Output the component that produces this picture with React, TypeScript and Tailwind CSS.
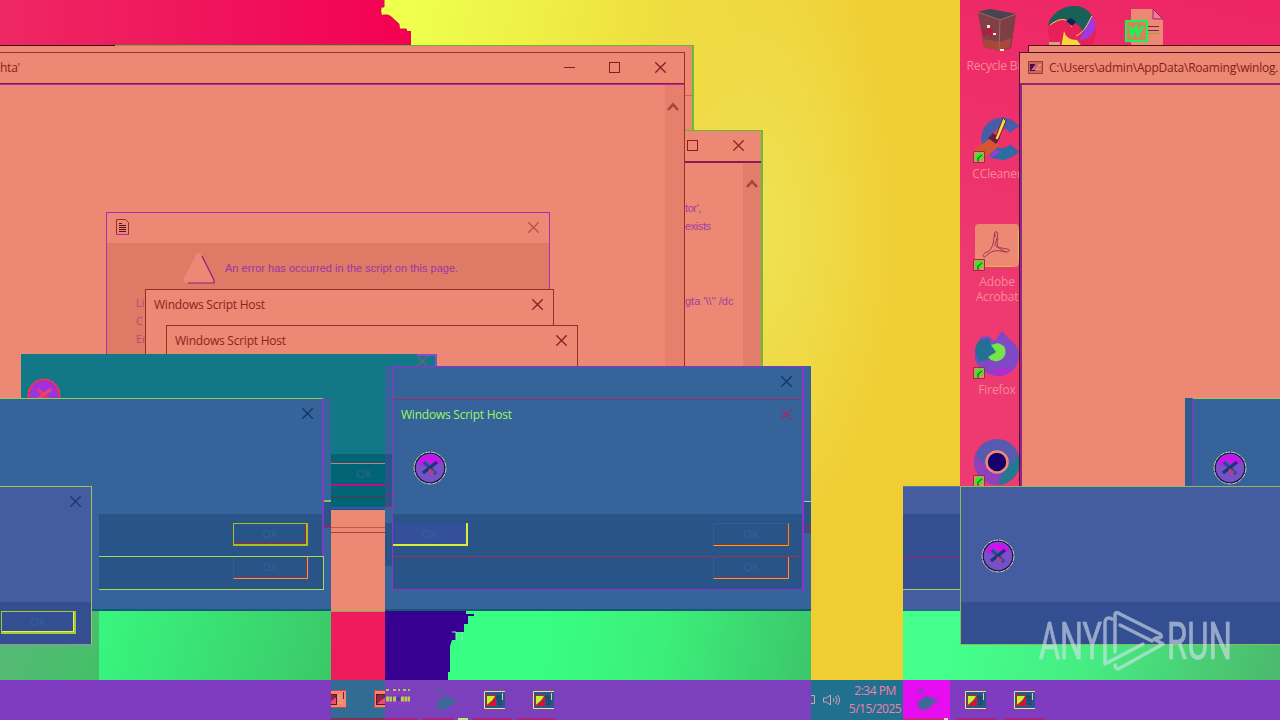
import type { ReactNode } from "react";

const UI = "font-['Open_Sans','Noto_Sans',sans-serif]";

function Close({ className = "text-[#8a2a20]" }: { className?: string }) {
  return (
    <svg className={`h-[11px] w-[11px] shrink-0 ${className}`} viewBox="0 0 11 11" fill="none" stroke="currentColor" strokeWidth="1.3">
      <path d="M.3 .3 10.7 10.7M10.7 .3 .3 10.7" />
    </svg>
  );
}

function Maximize() {
  return <span className="block h-[11px] w-[11px] shrink-0 border border-[#8a1c20]" />;
}

function Chevron({ className = "" }: { className?: string }) {
  return (
    <svg className={`h-[9px] w-3 ${className}`} viewBox="0 0 12 9" fill="none" stroke="#aa4438" strokeWidth="2.6">
      <path d="M1 8 6 2.500 11 8" />
    </svg>
  );
}

function ErrorIcon({ tone = "blue" }: { tone?: "blue" | "red" }) {
  const red = tone === "red";
  return (
    <svg className="block h-[34px] w-[34px] shrink-0" viewBox="0 0 34 34" fill="none">
      <circle cx="17" cy="17" r="15" fill={red ? "#9838d0" : "#7650c4"} stroke={red ? "#ff2058" : "#101858"} strokeWidth="1.6" />
      <circle cx="17" cy="17" r="15.900" stroke={red ? "#ff4060" : "#f0dc98"} strokeWidth=".9" strokeDasharray="5 .8" />
      <path d="M5 12A13 13 0 0 1 29 12L20 15 14 9 10 15Z" fill={red ? "#a030e0" : "#d010ee"} />
      <path d="M11 11 23 23" stroke={red ? "#e03878" : "#304898"} strokeWidth="3.4" />
      <path d="M10 22 24 11" stroke={red ? "#f04070" : "#143878"} strokeWidth="3.4" />
      <path d="M16 18 20 21 18 23" stroke="#e83068" strokeWidth="1.800" />
    </svg>
  );
}

function Shortcut() {
  return (
    <svg className="absolute bottom-0 left-0 h-3 w-3" viewBox="0 0 12 12">
      <path d="M.5 .5h11v11H.5z" fill="#d89060" stroke="#a02848" />
      <path d="M2 9V5l3-3h5v5L7 9 5 8l-2 3z" fill="#28f020" />
      <path d="M5 11V7l4-3" stroke="#204020" fill="none" />
    </svg>
  );
}

function Desk({ label, children }: { label: ReactNode; children?: ReactNode }) {
  return (
    <div className="flex h-[108px] w-[74px] flex-col items-center">
      <div className="relative h-12 w-12">{children}</div>
      <span className="mt-[3px] whitespace-nowrap text-center text-[12px] leading-[15px] tracking-[-0.15px] text-[#fa8896]">{label}</span>
    </div>
  );
}

function Program({ variant = "purple" }: { variant?: "purple" | "salmon" }) {
  const s = variant === "salmon";
  return (
    <svg className="block h-5 w-[23px] shrink-0" viewBox="0 0 23 20" fill="none">
      <path d="M1 1h21v18H1z" fill={s ? "#f08870" : "#285888"} />
      <path d="M22 1.500H1.500v17H22" stroke={s ? "#c84850" : "#e8e880"} />
      <path d="M3 5h10v11H3z" fill={s ? "#581830" : "#d01838"} />
      <path d="M4 6h8L9 11l-5 4z" fill={s ? "#902840" : "#b8f830"} />
      <path d="M4 15 12 8v7z" fill={s ? "#e85070" : "#c81838"} />
      <path d="M14 6h3v3h-3zM14 11h5M14 14h5" stroke={s ? "#f0a088" : "#183868"} />
      <path d="M19.500 3v7" stroke={s ? "#801830" : "#c0e088"} />
    </svg>
  );
}

function Bird() {
  return (
    <svg className="block h-6 w-7 shrink-0 blur-[1px]" viewBox="0 0 28 24" fill="#3a6a96">
      <path d="M4 3 8 1l4 3H7zM5 15c3-6 9-7 12-6l9 5-7 2c-2 7-12 7-14 3z" />
    </svg>
  );
}

function OkButton({ className }: { className: string }) {
  return <span className={`block text-center font-['Noto_Sans',sans-serif] text-[11px] text-[#34609a] ${className}`}>OK</span>;
}

function Wallpaper() {
  return (
    <>
      <div className="absolute inset-0 bg-[linear-gradient(97deg,#eeff4e_30%,#eff045_39%,#efdc3e_49%,#f0cd33_64%)]" />
      <div className="absolute inset-0 bg-[radial-gradient(ellipse_150px_330px_at_755px_230px,#efe254_5%,#efdc4a_35%,transparent)]" />
      <svg className="absolute left-0 top-0 h-[45px] w-[414px]" viewBox="0 0 414 45">
        <defs>
          <linearGradient id="pinkTop" x1="0" x2="1">
            <stop offset="0" stopColor="#ee2862" />
            <stop offset=".6" stopColor="#f0105c" />
            <stop offset="1" stopColor="#f40052" />
          </linearGradient>
        </defs>
        <path d="M0 0H384V7H381V10L382 15H389L392 17 395 20 399 24 400 29H407V31H411V45H0Z" fill="url(#pinkTop)" />
        <path d="M384 0V7H381V10M383 15H388L399 24V29H406" fill="none" stroke="#c81848" />
      </svg>
      <div className="absolute left-[960px] top-0 h-[486px] w-80 bg-[linear-gradient(15deg,#ee3a70_35%,#ee2464)]" />
      <div className="absolute inset-x-0 bottom-10 flex h-[70px]">
        <div className="w-[99px] bg-[linear-gradient(120deg,#58b878,#44c068)]" />
        <div className="w-[232px] bg-[linear-gradient(105deg,#38f47e_5%,#3cc868)]" />
        <div className="w-[54px] bg-[#ee1c5c]" />
        <div className="w-[426px] bg-[linear-gradient(100deg,#38ff84_35%,#3cee7a_65%,#3cc66a)]" />
        <div className="w-[92px]" />
        <div className="flex-1 bg-[linear-gradient(105deg,#44ff8c_15%,#46ec82_50%,#4cb86c)]" />
      </div>
      <svg className="absolute left-[385px] top-[611px] h-[69px] w-[90px]" viewBox="0 0 90 69">
        <path d="M0 0H81V3H89V5H83V13H79V21H71V29H67L65 35V61H63V69H0Z" fill="#380090" />
        <path d="M67 21H71V29M77 21V29" stroke="#88f0c0" fill="none" />
      </svg>
    </>
  );
}

function LeftStack() {
  return (
    <>
      {/* rear windows */}
      <section className="absolute left-0 top-[45px] h-[321px] w-[694px] border-r-2 border-t border-r-[#64c030] border-t-[#64b838] bg-[#ec8874]">
        <div className="-mt-px h-px w-[115px] bg-[#300818]" />
        <div className="mt-[49px] h-px bg-[#cf6450]" />
      </section>
      <section className="absolute left-[685px] top-[130px] flex h-[236px] w-[78px] flex-col border-r-2 border-t border-r-[#64c030] border-t-[#64b838] bg-[#ec8874]">
        <div className="flex h-8 items-center gap-[35px] border-b-2 border-[#8c1c50] pb-[1px] pl-[2px]">
          <Maximize />
          <Close />
        </div>
        <div className="flex flex-1">
          <div className="w-[58px] whitespace-nowrap font-['Liberation_Sans',sans-serif] text-[11px] leading-[18px] tracking-[-0.4px] text-[#a040a0]">
            <p className="mt-[36px]">tor',</p>
            <p>exists</p>
            <p className="mt-[57px] tracking-[0px]">gta '\\'' /dc</p>
          </div>
          <div className="flex-1 bg-[#e47e6c]">
            <Chevron className="ml-[3px] mt-[16px]" />
          </div>
        </div>
      </section>

      {/* HTA host window */}
      <section className="absolute left-0 top-[52px] flex h-[460px] w-[685px] flex-col border-r border-t border-[#943024] bg-[#ec8874]">
        <header className="flex h-[30px] shrink-0 items-center pb-[2px] text-[12px] tracking-[-0.25px] text-[#8a2418]">
          <span className="flex-1 pt-[2px]">hta'</span>
          <span className="mr-[34px] h-px w-[11px] bg-[#8a1c20]" />
          <Maximize />
          <Close className="ml-[35px] mr-[18px] text-[#8a1c20]" />
        </header>
        <div className="h-[2px] shrink-0 border-b border-[#b828b8] bg-[#8c1840]" />
        <div className="ml-auto w-[19px] flex-1 bg-[#e6806c]">
          <Chevron className="ml-[2px] mt-[17px]" />
        </div>
      </section>

      {/* script error dialog */}
      <section className="absolute left-[106px] top-[212px] flex h-[160px] w-[444px] flex-col border border-[#a830b8] bg-[#ec8874]">
        <header className="flex h-[30px] shrink-0 items-center justify-between pb-[2px] pl-[9px] pr-[10px]">
          <svg className="h-4 w-[13px]" viewBox="0 0 13 16" fill="none" stroke="#a02c24">
            <path d="M.5 15.500V.5h9l3 3v12z" />
            <path d="M.5 15.500h12" stroke="#c020a8" />
            <path d="M3 4.500h3M3 6.500h7M3 8.500h7M3 10.500h7M3 12.500h7" stroke="#501018" />
          </svg>
          <Close className="text-[#b84e44]" />
        </header>
        <div className="flex-1 bg-[#de7a66]">
          <div className="flex items-center pl-[75px] pt-[9px]">
            <svg className="h-8 w-[34px]" viewBox="0 0 34 32">
              <path d="M15 1h3l15 28-2 2H4l-3-3z" fill="#ec8874" />
              <path d="M20 4 32 28v3H6" fill="none" stroke="#902080" strokeWidth="1.200" />
            </svg>
            <span className="ml-[9px] whitespace-nowrap font-['Liberation_Sans',sans-serif] text-[11px] tracking-[0.03px] text-[#a034a8]">
              An error has occurred in the script on this page.
            </span>
          </div>
          <div className="ml-[29px] w-[9px] overflow-hidden pt-[10px] text-[11px] leading-[18px] text-[#b84878]">
            <p>Li</p>
            <p>C</p>
            <p>Er</p>
          </div>
        </div>
      </section>
      <ScriptHost className="left-[145px] top-[289px] h-20 w-[409px]" />
      <ScriptHost className="left-[166px] top-[325px] h-20 w-[412px]" />
    </>
  );
}

function ScriptHost({ className }: { className: string }) {
  return (
    <section className={`absolute border border-[#943024] bg-[#ec8874] ${className}`}>
      <header className="flex h-[29px] items-center justify-between pl-2 pr-[10px] text-[12px] tracking-[-0.23px] text-[#8a2418]">
        <span>Windows Script Host</span>
        <Close className="mb-px text-[#8a1c20]" />
      </header>
    </section>
  );
}

function LowerDialogs() {
  return (
    <>
      {/* teal dialog */}
      <section className="absolute left-[21px] top-[354px] h-[156px] w-[416px] bg-[#127888]">
        <div className="flex h-[100px] justify-between">
          <div className="pl-[6px] pt-[24px]"><ErrorIcon tone="red" /></div>
          <div className="h-3 w-5 border-r-2 border-t-2 border-[#8050c8] bg-[#127888]">
            <Close className="text-[#6c6474]" />
          </div>
        </div>
        <div className="ml-[310px] flex h-[56px] w-[54px] flex-col bg-[#006474]">
          <div className="mt-[9px] h-[23px] border-b-2 border-t border-b-[#b8108c] border-t-[#d87880] pl-[9px]">
            <OkButton className="w-12 leading-[20px]" />
          </div>
          <div className="mt-[11px] h-px bg-[#60304c]" />
          <div className="mt-[9px] h-[2px] bg-[#3850c0]" />
        </div>
      </section>
      <div className="absolute left-[331px] top-[510px] h-[102px] w-[54px] border-b border-[#80b050] bg-[#ec8874] pt-[17px]">
        <div className="h-[6px] border-b border-t border-b-[#b03c38] border-t-[#c85848]" />
      </div>

      {/* left blue dialog */}
      <section className="absolute left-0 top-[398px] flex h-[213px] w-[331px] flex-col border-b-2 border-[#185878] bg-[#35639a]">
        <div className="flex h-[158px] w-[324px] flex-col border-r-2 border-t border-r-[#7c3cc8] border-t-[#98c850]">
          <div className="flex h-[115px] justify-end pr-[9px] pt-[9px]">
            <Close className="text-[#123468]" />
          </div>
          <div className="ml-[99px] flex-1 bg-[#285488] pl-[134px] pt-[9px]">
            <OkButton className="h-[23px] w-[75px] border border-b-2 border-r-2 border-[#a8c020] leading-[20px] shadow-[inset_-1px_-1px_#a82040]" />
          </div>
        </div>
        <div className="ml-[99px] h-[34px] w-[225px] border-b border-r border-t border-[#a8d850] bg-[#285488] pl-[134px]">
          <OkButton className="h-[22px] w-[75px] border border-t-0 border-[#2c6098] border-b-[#d8a050] border-r-[#d8a050] leading-[20px] shadow-[inset_-1px_-1px_#a02840]" />
        </div>
      </section>
      <div className="absolute left-[324px] top-[500px] h-7 w-[7px] border-b-2 border-t-2 border-b-[#803070] border-t-[#90b870] bg-[#285488]" />

      {/* lower left dialog */}
      <section className="absolute left-0 top-[486px] flex h-[159px] w-[92px] flex-col border-b border-r border-t border-b-[#a888b0] border-r-[#a0c858] border-t-[#98c850] bg-[#445ca0]">
        <div className="flex h-[115px] justify-end pr-[10px] pt-[9px]">
          <Close className="text-[#183878]" />
        </div>
        <div className="flex-1 bg-[#344e92] pl-px pt-[9px]">
          <OkButton className="h-[23px] w-[75px] border border-b-2 border-r-2 border-[#a8c830] leading-[20px] shadow-[inset_-1px_-1px_#e4f060]" />
        </div>
      </section>

      {/* centre dialogs */}
      <section className="absolute left-[385px] top-[366px] h-[245px] w-[426px] border-b-2 border-[#185870] bg-[#35639a] px-[7px]">
        <div className="flex h-[224px] flex-col border border-r-2 border-[#9430cc]">
          <div className="flex h-[33px] shrink-0 items-start justify-end border-b border-[#983060] pr-[10px] pt-[9px]">
            <Close className="text-[#123468]" />
          </div>
          <header className="flex h-[30px] shrink-0 items-center justify-between pl-2 pr-[10px] text-[12px] tracking-[-0.23px] text-[#9cf860]">
            <span>Windows Script Host</span>
            <Close className="mb-px text-[#a82858]" />
          </header>
          <div className="h-[84px] shrink-0 pl-5 pt-[21px]"><ErrorIcon /></div>
          <div className="flex h-[43px] shrink-0 justify-between border-b border-[#983060] bg-[#285488] pr-[13px] pt-[9px]">
            <OkButton className="h-[23px] w-[75px] border-b-2 border-r-2 border-[#dcec38] bg-[#34509a] leading-[21px]" />
            <OkButton className="h-[23px] w-[76px] border border-[#2c6098] border-b-[#f0a034] border-r-[#e89030] leading-[20px] shadow-[inset_-1px_-1px_#883428]" />
          </div>
          <div className="flex flex-1 justify-end bg-[#285488] pr-[13px]">
            <OkButton className="h-[22px] w-[76px] border border-t-0 border-[#2c6098] border-b-[#e0a048] border-r-[#e89840] leading-[20px] shadow-[inset_-1px_-1px_#903038]" />
          </div>
        </div>
      </section>
      <div className="absolute left-[804px] top-[501px] h-[32px] w-[7px] border-t border-[#98d0b8] bg-[#285488] pt-[23px]">
        <div className="h-[7px] border-b-2 border-t-2 border-[#783470]" />
      </div>
      <div className="absolute left-[385px] top-[454px] h-[112px] w-[7px] bg-[#285488] pt-[41px]">
        <div className="h-[12px] border-b-2 border-t border-[#783470]" />
        <div className="h-[16px] bg-[#35639a]" />
      </div>
    </>
  );
}

function RightDesktop() {
  return (
    <>
      <div className="absolute left-[960px] top-[7px] flex flex-col">
        <Desk label="Recycle Bin">
          <svg className="h-12 w-12" viewBox="0 0 48 48">
            <path d="M5 5 17 2 43 7 38 41 27 44 11 40z" fill="#804048" />
            <path d="M5 5 17 2 43 7 27 13z" fill="#484454" />
            <path d="M27 13 43 7 38 41 27 44z" fill="#7c4044" />
            <path d="M10 32 27 35 38 31 37 40 27 44 11 40z" fill="#a84838" />
            <path d="m8 22 5 2 3-6 4 6 3 2-5 4-3-4-4 4z" fill="#b01c44" />
            <path d="M14 18h3v3h-3zM20 26h3v2h-3zM27 42h4v2h-4z" fill="#ffecc4" />
            <path d="M5 5 27 13 43 7M27 13 26 43" fill="none" stroke="#a06864" />
          </svg>
        </Desk>
        <Desk label="CCleaner">
          <svg className="h-12 w-12" viewBox="0 0 48 48">
            <path d="M46 11A21 21 0 1 0 46 36L37 29A10 10 0 1 1 37 18z" fill="#485ca8" />
            <path d="M18 43 25 34 35 32 43 38 32 45z" fill="#2870a0" />
            <path d="M22 35 15 44 28 37z" fill="#a038e8" />
            <path d="M2 34 18 23 27 30 15 41H2z" fill="#d85430" />
            <path d="m15 23 5-5 7 5-4 6z" fill="#602040" />
            <path d="M22 24 30 3 33 6 25 25z" fill="#f4dc40" stroke="#702040" />
          </svg>
          <Shortcut />
        </Desk>
        <Desk label={<>Adobe<br />Acrobat</>}>
          <svg className="h-12 w-12" viewBox="0 0 48 48">
            <rect x="2" y="1" width="44" height="43" rx="4" fill="#ec8874" />
            <path d="M12 43.500H40M45.500 7V37" stroke="#c8c840" />
            <path d="M22 9c6-2 0 11 0 13 0 4 18 3 14 6-5 4-12-6-23 5-3 3-5-2 1-4 8-4 6-14 8-20zM22 11v3M25 15c-3 10 2 11 8 14" fill="none" stroke="#a03450" />
          </svg>
          <Shortcut />
        </Desk>
        <Desk label="Firefox">
          <svg className="h-12 w-12" viewBox="0 0 48 48">
            <path d="M2 17 8 6 15 5 22 10 29 0 35 7Q46 14 46 25Q44 38 36 42Q28 48 16 43Q5 39 2 28Z" fill="#8048c4" />
            <path d="M2 20C4 10 7 7 10 9L16 7 18 14 26 20 14 29 5 31z" fill="#246f94" />
            <path d="M18 14 25 12 31 15A9.500 9.500 0 1 1 15 26L23 21z" fill="#74e448" />
            <path d="M15 41 28 45 40 39 31 37z" fill="#b828d0" />
          </svg>
          <Shortcut />
        </Desk>
        <Desk label="">
          <svg className="h-12 w-12" viewBox="0 0 48 48">
            <circle cx="24" cy="23" r="23" fill="#575aae" />
            <path d="M2 17A23 23 0 0 0 24 46L28 34 15 29z" fill="#9040bc" />
            <path d="M46 17A23 23 0 0 1 25 46L33 29z" fill="#247890" />
            <circle cx="24" cy="23" r="10.500" fill="#16006c" stroke="#f08874" strokeWidth="2.500" />
          </svg>
          <Shortcut />
        </Desk>
      </div>

      <svg className="absolute left-[1048px] top-[6px] h-[42px] w-12" viewBox="0 0 48 42">
        <circle cx="24" cy="25" r="24" fill="#e82058" />
        <path d="M0 19C5 0 34-8 44 10L35 30Q34 18 24 16Q14 9 2 19z" fill="#186058" />
        <path d="M44 10C51 21 47 30 31 35L37 23z" fill="#a038e8" />
        <path d="M13 42 16 25Q18 34 29 34L35 42z" fill="#f8d838" />
        <path d="M2 19C14 10 20 13 24 21M44 10C39 18 38 25 28 30" fill="none" stroke="#f8d060" />
        <path d="m18 15 5-3 5 4-4 4z" fill="#102050" />
        <path d="M1 36h11v5H1z" fill="#d8a080" />
      </svg>
      <svg className="absolute left-[1124px] top-2 h-10 w-10" viewBox="0 0 40 40">
        <path d="M7 1H29L39 11V40H7z" fill="#ec8874" />
        <path d="M29 1V11H39z" fill="#f07898" stroke="#a02060" />
        <path d="M24 18.500h11M24 22.500h11" stroke="#702848" />
        <path d="M24 25.500h11" stroke="#a0a040" />
        <rect x="2" y="13" width="21" height="20" fill="#d88060" stroke="#20f050" strokeWidth="2.200" />
        <path d="m6 18 2 9 4-8 2 8 5-9" fill="none" stroke="#20f050" strokeWidth="3" />
      </svg>

      <div className="absolute left-[1028px] top-[45px] h-10 w-[252px] border-l border-t border-[#501020] bg-[#ec8874]" />
      <section className="absolute left-[1019px] top-[52px] flex h-[434px] w-[261px] flex-col border-l border-t border-[#501028] bg-[#ec8874]">
        <header className="flex h-[30px] shrink-0 items-center gap-[6px] pl-2 text-[12px] tracking-[-0.22px] text-[#842018]">
          <svg className="mb-[2px] h-[13px] w-[15px] shrink-0" viewBox="0 0 15 13">
            <path d="M.5 .5h14v12H.5z" fill="#cc6858" stroke="#943c38" />
            <path d="M2 3h5v7H2z" fill="#481040" />
            <path d="m3 9 4-5v5z" fill="#d858c0" />
            <path d="m8 9 5-6M10 4h3M8 8h5" stroke="#f0a090" />
          </svg>
          <span className="whitespace-nowrap">C:\Users\admin\AppData\Roaming\winlog.</span>
        </header>
        <div className="flex-1 border-l-2 border-t-2 border-l-[#90288c] border-t-[#942470]" />
      </section>

      <section className="absolute left-[1185px] top-[398px] flex h-[88px] w-[95px] bg-[#2d5c90]">
        <div className="ml-[7px] flex-1 border-l-2 border-t border-l-[#6848b4] border-t-[#98c850] bg-[#35639a] pl-[19px] pt-[52px]">
          <ErrorIcon />
        </div>
      </section>
      <section className="absolute left-[903px] top-[486px] h-[125px] w-[57px] border-b-2 border-t border-b-[#28688c] border-t-[#5080a8] bg-[#445ca0] pt-[27px]">
        <div className="h-[76px] border-b border-[#a0d060] bg-[#344e92] pt-[42px]">
          <div className="h-px bg-[#942070]" />
        </div>
      </section>
      <section className="absolute left-[960px] top-[486px] flex h-[159px] w-80 flex-col border-b border-l border-t border-[#8cbc58] bg-[#445ca0]">
        <div className="h-[115px] pl-5 pt-[52px]"><ErrorIcon /></div>
        <div className="flex-1 bg-[#344e92]" />
      </section>
    </>
  );
}

function Watermark() {
  return (
    <svg className="absolute left-[1036px] top-[606px] h-[70px] w-[200px] opacity-60" viewBox="0 0 200 70" fill="#d8e4ee">
      <g fontFamily="Roboto, sans-serif" fontSize="51" fontWeight="400" stroke="#d8e4ee" strokeWidth=".7">
        <text x="3" y="53" textLength="63" lengthAdjust="spacingAndGlyphs">ANY</text>
        <text x="131" y="53" textLength="65" lengthAdjust="spacingAndGlyphs">RUN</text>
      </g>
      <g fill="none" stroke="#d8e4ee" strokeWidth="3.500" strokeLinecap="round" strokeLinejoin="round">
        <path d="M79 46V8Q80 5 84 8L124 28Q128 32 120 32M84 19 116 35" />
        <path d="M76 13Q70 10 69 16V58L107 38" />
        <path d="M79 59Q80 65 84 62L127 38 118 33" />
      </g>
    </svg>
  );
}

function Taskbar() {
  return (
    <footer className="absolute inset-x-0 bottom-0 flex h-10 bg-[#803cc0]">
      <div className="w-[331px]" />
      <div className="flex w-[54px] items-center justify-between overflow-hidden border-b-2 border-[#88305c] bg-[#306c94]">
        <div className="-ml-[7px]"><Program variant="salmon" /></div>
        <div className="-mr-[11px]"><Program variant="salmon" /></div>
      </div>
      <div className="relative flex w-[426px] items-center bg-[#7c40bc]">
        <svg className="mb-2 h-4 w-[26px]" viewBox="0 0 26 16">
          <path d="M1 2h5M8 2h7M18 2h7" stroke="#b0c858" strokeWidth="2" strokeDasharray="3 2" />
          <path d="M2 5h22M3 15h21" stroke="#b030d0" strokeWidth="1.500" strokeDasharray="3 2" />
          <path d="M1 11h6M8 11h3M16 11h9" stroke="#b8c850" strokeWidth="5" strokeDasharray="3 .5" />
          <path d="m11 12 3-4 1 5z" fill="#304080" />
        </svg>
        <div className="ml-[21px]"><Bird /></div>
        <div className="ml-[23px]"><Program /></div>
        <div className="ml-[26px]"><Program /></div>
        <div className="absolute bottom-0 left-0 flex h-[2px] gap-1">
          <span className="w-[33px] bg-[#b02080]" />
          <span className="w-[32px] bg-[#b02080]" />
          <span className="w-[10px] bg-[#c0e878]" />
          <span className="w-10 bg-[#b02080]" />
          <span className="w-10 bg-[#b02080]" />
        </div>
      </div>
      <div className="flex w-[92px] items-center justify-between bg-[#20708f] pr-[1px] text-[#f080a8]">
        <svg className="h-4 w-[30px]" viewBox="0 0 30 16" fill="none" stroke="#d8a0b0">
          <path d="M0 3.500h3.500v8H0M12.500 6v4h3l4 3V3l-4 3zM22 6q2 2 0 4M24.500 4q3 4 0 8M26.500 3q4 5 0 10" />
        </svg>
        <div className="w-[54px] whitespace-nowrap text-center text-[12px] leading-[18px] tracking-[-0.5px]">
          <p>2:34 PM</p>
          <p>5/15/2025</p>
        </div>
      </div>
      <div className="relative flex flex-1 items-center">
        <div className="flex h-full w-[47px] items-center justify-center bg-[#e80cf0]"><Bird /></div>
        <div className="ml-[14px]"><Program /></div>
        <div className="ml-[26px]"><Program /></div>
        <div className="absolute bottom-0 left-0 flex h-[2px] gap-2">
          <span className="w-[45px] border-r-4 border-[#e8d8b0] bg-[#d02080]" />
          <span className="w-[41px] bg-[#b02080]" />
          <span className="w-[40px] bg-[#b02080]" />
        </div>
      </div>
    </footer>
  );
}

export default function App() {
  return (
    <main className={`relative h-[720px] w-[1280px] overflow-hidden ${UI}`}>
      <Wallpaper />
      <LeftStack />
      <LowerDialogs />
      <RightDesktop />
      <Taskbar />
      <Watermark />
    </main>
  );
}
